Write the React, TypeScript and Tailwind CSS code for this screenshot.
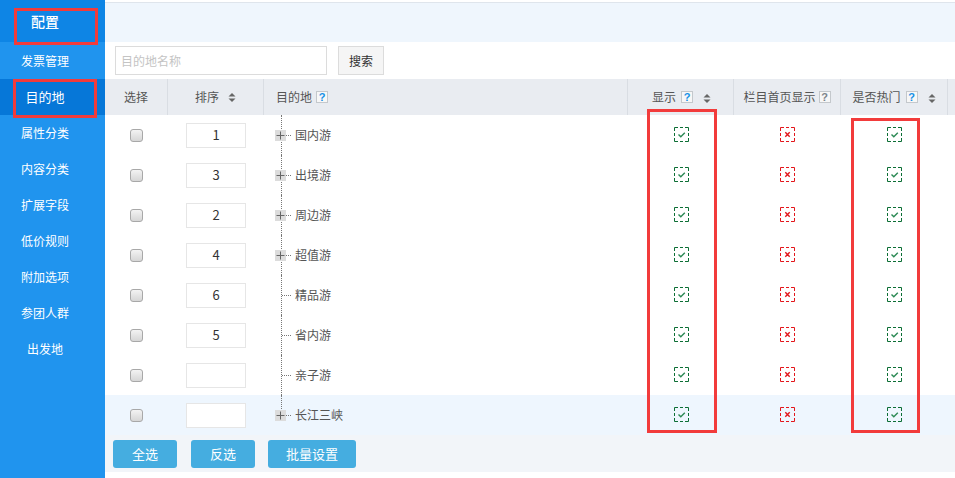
import React from "react";

const font = { fontFamily: '"Noto Sans CJK SC", "Noto Sans", sans-serif' };

function Help({ gray }: { gray?: boolean }) {
  return (
    <span
      className={`inline-flex items-center justify-center w-[12px] h-[12px] border border-[#c4c8cc] bg-[#f7f7f7] text-[11px] leading-none font-bold ${gray ? "text-[#7d848c]" : "text-[#1590e6]"}`}
      style={{ fontFamily: '"Liberation Sans", sans-serif' }}
    >
      ?
    </span>
  );
}

function Sort() {
  return (
    <svg width="8" height="11" viewBox="0 0 8 11" className="inline-block">
      <path d="M0.5 4.5 L4 1 L7.5 4.5 Z" fill="#666" />
      <path d="M0.5 6.5 L7.5 6.5 L4 10 Z" fill="#666" />
    </svg>
  );
}

function Mark({ ok }: { ok: boolean }) {
  const c = ok ? "#0c6e35" : "#e3161b";
  return (
    <svg width="16" height="16" viewBox="0 0 16 16">
      <rect x="0.5" y="0.5" width="14" height="14" fill="none" stroke={c} strokeWidth="1" strokeDasharray="3.5 2 3 2 3.5 0" />
      {ok ? (
        <path d="M4.5 7.5 L6.8 9.8 L10.8 5.8" fill="none" stroke="#2c8a55" strokeWidth="1.4" />
      ) : (
        <path d="M5.3 5.3 L9.7 9.7 M9.7 5.3 L5.3 9.7" fill="none" stroke="#e3161b" strokeWidth="1.4" />
      )}
    </svg>
  );
}

function PlusBox() {
  return (
    <svg width="11" height="11" viewBox="0 0 11 11" className="relative block">
      <rect x="0" y="0" width="11" height="11" fill="#dcdcdc" />
      <path d="M1.5 5.5 H9.5 M5.5 1.5 V9.5" stroke="#666" strokeWidth="1" />
    </svg>
  );
}

function Checkbox() {
  return <span className="block w-[13px] h-[13px] rounded-[3px] border border-[#a8a8a8] bg-gradient-to-b from-[#f3f3f3] to-[#d6d6d6]" />;
}

const rows = [
  { n: "1", name: "国内游", plus: true },
  { n: "3", name: "出境游", plus: true },
  { n: "2", name: "周边游", plus: true },
  { n: "4", name: "超值游", plus: true },
  { n: "6", name: "精品游", plus: false },
  { n: "5", name: "省内游", plus: false },
  { n: "", name: "亲子游", plus: false },
  { n: "", name: "长江三峡", plus: true, last: true },
];

const cols = "grid grid-cols-[63px_96px_364px_106px_107px_107px_7px]";

export default function App() {
  return (
    <div className="relative flex w-[955px] h-[478px] overflow-hidden bg-white text-[12px]" style={font}>
      {/* Sidebar */}
      <div className="w-[105px] shrink-0 bg-[#2094ee] flex flex-col text-white">
        <div className="h-[42px] bg-[#0e85e5] flex items-center justify-center pr-[15px] text-[14px] font-medium">配置</div>
        <div className="h-[37px] flex items-center justify-center pr-[15px]">发票管理</div>
        <div className="h-[36px] bg-[#0677d8] flex items-center justify-center pr-[15px] text-[13px]">目的地</div>
        {["属性分类", "内容分类", "扩展字段", "低价规则", "附加选项", "参团人群", "出发地"].map((t) => (
          <div key={t} className="h-[36px] flex items-center justify-center pr-[15px]">{t}</div>
        ))}
      </div>

      {/* Main */}
      <div className="flex-1 flex flex-col text-[#555]">
        <div className="mt-[2px] h-[40px] border-t border-[#dfe5ec] bg-[#eff6fd]" />
        <div className="h-[37px] flex items-center pl-[10px]">
          <div className="w-[212px] h-[29px] border border-[#dcdcdc] flex items-center pl-[5px] text-[#c4c4c4]">目的地名称</div>
          <div className="ml-[11px] w-[46px] h-[29px] border border-[#dcdcdc] bg-[#f5f5f5] flex items-center justify-center text-[#333]">搜索</div>
        </div>

        {/* Header */}
        <div className={`${cols} h-[36px] bg-[#e9ecf1]`}>
          <div className="flex items-center justify-center border-r border-[#d9dde3]">选择</div>
          <div className="flex items-center justify-center gap-[9px] border-r border-[#d9dde3]">排序<Sort /></div>
          <div className="flex items-center pl-[12px] gap-[4px] border-r border-[#d9dde3]">目的地<Help /></div>
          <div className="flex items-center justify-center gap-[5px] border-r border-[#d9dde3] pl-[2px]">显示<Help /><span className="ml-[5px]"><Sort /></span></div>
          <div className="flex items-center justify-center gap-[3px] border-r border-[#d9dde3]">栏目首页显示<Help gray /></div>
          <div className="flex items-center justify-center gap-[5px] border-r border-[#d9dde3]">是否热门<Help /><span className="ml-[5px]"><Sort /></span></div>
          <div />
        </div>

        {/* Rows */}
        {rows.map((r, i) => (
          <div key={i} className={`${cols} h-[40px] ${r.last ? "bg-[#eef6fe]" : ""}`}>
            <div className="flex items-center justify-center"><Checkbox /></div>
            <div className="flex items-center justify-center">
              <div className="w-[60px] h-[25px] border border-[#e6e6e6] bg-white flex items-center justify-center text-[13px] text-[#333]">{r.n}</div>
            </div>
            <div className="relative flex items-center pl-[11px]">
              <span className={`absolute left-[17px] top-0 border-l border-dotted border-[#777] ${r.last ? "h-[20px]" : "h-[40px]"}`} />
              {r.plus ? (
                <>
                  <PlusBox />
                  <span className="w-[5px] border-t border-dotted border-[#777]" />
                </>
              ) : (
                <>
                  <span className="w-[7px]" />
                  <span className="w-[9px] border-t border-dotted border-[#777]" />
                </>
              )}
              <span className="ml-[4px] text-[#555]">{r.name}</span>
            </div>
            <div className="flex items-center justify-center pl-[1px]"><Mark ok /></div>
            <div className="flex items-center justify-center"><Mark ok={false} /></div>
            <div className="flex items-center justify-center"><Mark ok /></div>
            <div />
          </div>
        ))}

        {/* Footer */}
        <div className="h-[37px] bg-[#f2f5f9] flex items-center pl-[8px] gap-[14px]">
          <button className="w-[64px] h-[28px] rounded-[3px] bg-[#45ade0] text-white text-[13px]">全选</button>
          <button className="w-[64px] h-[28px] rounded-[3px] bg-[#45ade0] text-white text-[13px]">反选</button>
          <button className="w-[88px] h-[28px] rounded-[3px] bg-[#45ade0] text-white text-[13px] -ml-[1px]">批量设置</button>
        </div>
      </div>

      {/* Red annotation boxes */}
      <div className="absolute left-[14px] top-[8px] w-[84px] h-[37px] border-[3px] border-[#f23b3b] pointer-events-none" />
      <div className="absolute left-[13px] top-[79px] w-[84px] h-[39px] border-[3px] border-[#f23b3b] pointer-events-none" />
      <div className="absolute left-[647px] top-[109px] w-[70px] h-[324px] border-[3px] border-[#f23b3b] pointer-events-none" />
      <div className="absolute left-[851px] top-[118px] w-[69px] h-[315px] border-[3px] border-[#f23b3b] pointer-events-none" />
    </div>
  );
}
